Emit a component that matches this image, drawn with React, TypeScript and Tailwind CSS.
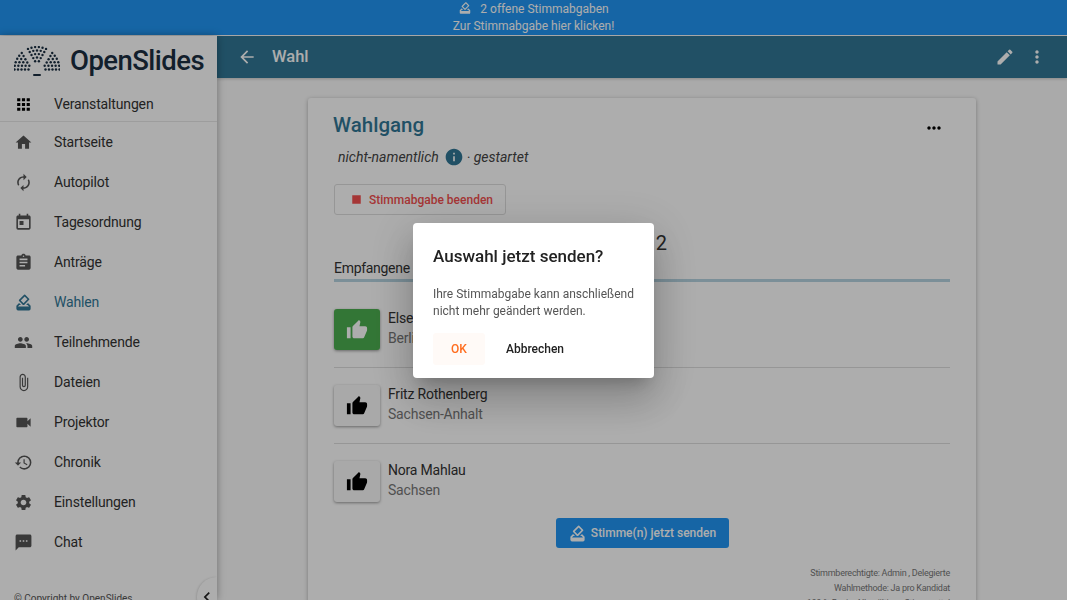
import React from "react";
import {
  MdApps,
  MdArrowBack,
  MdAssignment,
  MdAttachFile,
  MdAutorenew,
  MdChevronLeft,
  MdEdit,
  MdHistory,
  MdHome,
  MdHowToVote,
  MdInfo,
  MdMoreHoriz,
  MdMoreVert,
  MdPeople,
  MdSettings,
  MdSms,
  MdStop,
  MdThumbUp,
  MdToday,
  MdVideocam,
} from "react-icons/md";

const navItems = [
  { label: "Startseite", icon: MdHome },
  { label: "Autopilot", icon: MdAutorenew },
  { label: "Tagesordnung", icon: MdToday },
  { label: "Anträge", icon: MdAssignment },
  { label: "Wahlen", icon: MdHowToVote, active: true },
  { label: "Teilnehmende", icon: MdPeople },
  { label: "Dateien", icon: MdAttachFile },
  { label: "Projektor", icon: MdVideocam },
  { label: "Chronik", icon: MdHistory },
  { label: "Einstellungen", icon: MdSettings },
  { label: "Chat", icon: MdSms },
];

const candidates = [
  { name: "Else Gerlach", region: "Berlin", voted: true },
  { name: "Fritz Rothenberg", region: "Sachsen-Anhalt", voted: false },
  { name: "Nora Mahlau", region: "Sachsen", voted: false },
];

// Parliament seats of the logo: five rows on half circles, cut into three blocks
const Logo = () => {
  const rows = [
    { r: 8.5, n: 8 },
    { r: 12, n: 11 },
    { r: 15.5, n: 14 },
    { r: 19, n: 17 },
    { r: 22.5, n: 20 },
  ];
  const seats: { x: number; y: number }[] = [];
  rows.forEach((row) => {
    for (let i = 0; i < row.n; i++) {
      const deg = (i * 180) / (row.n - 1);
      // gaps between the blocks
      if (Math.abs(deg - 55) < 5 || Math.abs(deg - 125) < 5) continue;
      const a = (deg * Math.PI) / 180;
      seats.push({ x: 23 - row.r * Math.cos(a), y: 23.5 - row.r * Math.sin(a) });
    }
  });
  return (
    <svg width="46" height="31" viewBox="0 0 46 31" className="shrink-0">
      {seats.map((s, i) => (
        <circle key={i} cx={s.x} cy={s.y} r="1.2" fill="#1b2f42" />
      ))}
      <rect x="19" y="28" width="8" height="2" rx="1" fill="#1b2f42" />
    </svg>
  );
};

export default function App() {
  return (
    <div className="relative flex h-[600px] w-[1067px] flex-col overflow-hidden bg-[#fbfbfb] font-['Roboto',sans-serif] text-[#222]">
      {/* Vote banner */}
      <div className="flex h-9 shrink-0 flex-col items-center border-b border-white bg-[#2196f3] pt-[1px] text-[12px] leading-[17px] text-white">
        <div className="flex items-center gap-[8px]">
          <MdHowToVote className="mb-[3px] text-[14px]" />
          <span>2 offene Stimmabgaben</span>
        </div>
        <div>Zur Stimmabgabe hier klicken!</div>
      </div>

      <div className="flex min-h-0 flex-1">
        {/* Sidebar */}
        <aside className="relative z-10 flex w-[217px] shrink-0 flex-col bg-white shadow-[0_0_8px_rgba(0,0,0,0.35)]">
          <div className="flex h-[50px] shrink-0 items-center gap-[10px] pl-[14px]">
            <Logo />
            <span className="text-[27.5px] font-medium tracking-[-0.55px] text-[#1b2f42]">OpenSlides</span>
          </div>
          <div className="flex h-[36px] shrink-0 items-center border-b border-[#e8e8e8] pl-[14px] pt-[1px] text-[#333]">
            <MdApps className="text-[19px] text-black" />
            <span className="ml-[21px] text-[14px] tracking-[-0.15px]">Veranstaltungen</span>
          </div>
          <nav className="flex flex-col">
            {navItems.map((item) => {
              const Icon = item.icon;
              return (
                <div
                  key={item.label}
                  className={`flex h-10 items-center pl-[14px] text-[14px] tracking-[-0.15px] ${
                    item.active ? "text-[#317796]" : "text-[#555]"
                  }`}
                >
                  <Icon className="w-[19px] text-[19px]" />
                  <span className={`ml-[21px] ${item.active ? "" : "text-[#333]"}`}>{item.label}</span>
                </div>
              );
            })}
          </nav>
          <div className="mt-auto flex items-end justify-between">
            <span className="mb-[-6px] pl-[14px] text-[10px] text-[#555]">© Copyright by OpenSlides</span>
            <div className="mb-[-17px] flex h-[40px] w-[20px] items-center justify-center rounded-l-full bg-white shadow-[-1px_0_2px_rgba(0,0,0,0.12)]">
              <MdChevronLeft className="text-[22px] text-[#222]" />
            </div>
          </div>
        </aside>

        {/* Main column */}
        <div className="flex min-w-0 flex-1 flex-col">
          <header className="flex h-[42px] shrink-0 items-center bg-[#317796] pl-[20px] pr-[20px] text-white shadow-[0_1px_3px_rgba(0,0,0,0.2)]">
            <MdArrowBack className="text-[20px]" />
            <h1 className="ml-[15px] text-[16.5px] font-medium">Wahl</h1>
            <MdEdit className="ml-auto mr-[1px] text-[20px]" />
            <MdMoreVert className="ml-[11px] text-[20px]" />
          </header>

          <main className="min-h-0 flex-1 overflow-hidden px-[91px] pt-5">
            <section className="flex w-[668px] flex-col rounded-[3px] bg-white px-[26px] pt-[14px] shadow-[0_1px_4px_rgba(0,0,0,0.3)]">
              <div className="flex items-center justify-between">
                <h2 className="ml-[-1px] text-[20.5px] font-medium leading-[26px] text-[#317796]">Wahlgang</h2>
                <MdMoreHoriz className="mr-[6px] mt-[6px] text-[20px] text-black" />
              </div>
              <div className="mt-[9px] flex items-center pl-1 text-[14px] italic leading-[20px] text-[#444]">
                <span>nicht-namentlich</span>
                <MdInfo className="ml-[5px] text-[20px] text-[#317796]" />
                <span className="ml-[3px]">· gestartet</span>
              </div>
              <div className="mt-[17px] flex h-[31px] w-[172px] items-center rounded-[3px] border border-[#ddd] pl-[13px] text-[12px] font-medium text-[#f45050]">
                <MdStop className="text-[17px]" />
                <span className="ml-[4px]">Stimmabgabe beenden</span>
              </div>

              <div className="mt-[16px] pl-[281px] text-[20px] leading-[24px] text-[#333]">0 / 12</div>
              <div className="mt-[2px] text-[14px] leading-[22px] tracking-[-0.3px] text-[#333]">Empfangene Stimmen</div>
              <div className="h-[3px] bg-[#b5d3e0]" />

              <div className="mt-[10px] flex flex-col">
                {candidates.map((c, i) => (
                  <div
                    key={c.name}
                    className={`flex h-[76px] items-center ${i < 2 ? "border-b border-[#ddd]" : "pb-[1px]"}`}
                  >
                    <div
                      className={`flex h-[41px] w-[46px] items-center justify-center rounded-[3px] text-[22px] shadow-[0_1px_3px_rgba(0,0,0,0.4)] ${
                        c.voted ? "bg-[#4caf50] text-white" : "bg-[#fafafa] text-black"
                      }`}
                    >
                      <MdThumbUp />
                    </div>
                    <div className="mb-[3px] ml-2 text-[14px] leading-[20px] tracking-[-0.2px] text-[#333]">
                      <div>{c.name}</div>
                      <div className="text-[#777]">{c.region}</div>
                    </div>
                  </div>
                ))}
              </div>

              <div className="mt-[-2px] flex justify-center">
                <div className="flex h-[30px] w-[173px] items-center justify-center rounded-[3px] bg-[#2196f3] text-[12px] font-medium text-white">
                  <MdHowToVote className="mr-[4px] text-[19px]" />
                  Stimme(n) jetzt senden
                </div>
              </div>

              <div className="mt-[18px] pb-4 text-right text-[9px] leading-[15px] tracking-[-0.25px] text-[#777]">
                <div>Stimmberechtigte: Admin , Delegierte</div>
                <div>Wahlmethode: Ja pro Kandidat</div>
                <div>100 %-Basis: Alle gültigen Stimmzettel</div>
              </div>
            </section>
          </main>
        </div>
      </div>

      {/* Dialog backdrop and dialog */}
      <div className="fixed inset-0 z-20 flex items-center justify-center bg-black/32">
        <div className="h-[155px] w-[241px] rounded-[4px] bg-white px-5 pt-[21px] shadow-[0_11px_15px_-7px_rgba(0,0,0,0.2),0_24px_38px_3px_rgba(0,0,0,0.14),0_9px_46px_8px_rgba(0,0,0,0.12)]">
          <h3 className="text-[17px] font-medium leading-[24px] text-[#222]">Auswahl jetzt senden?</h3>
          <p className="mt-[18px] text-[12px] leading-[17px] text-[#555]">
            Ihre Stimmabgabe kann anschließend
            <br />
            nicht mehr geändert werden.
          </p>
          <div className="mt-[13px] flex items-center text-[12px] font-medium">
            <div className="flex h-8 w-[52px] items-center justify-center rounded-[3px] bg-[#fffaf7] text-[#ff6d1f]">OK</div>
            <div className="ml-[21px] text-[#222]">Abbrechen</div>
          </div>
        </div>
      </div>
    </div>
  );
}
